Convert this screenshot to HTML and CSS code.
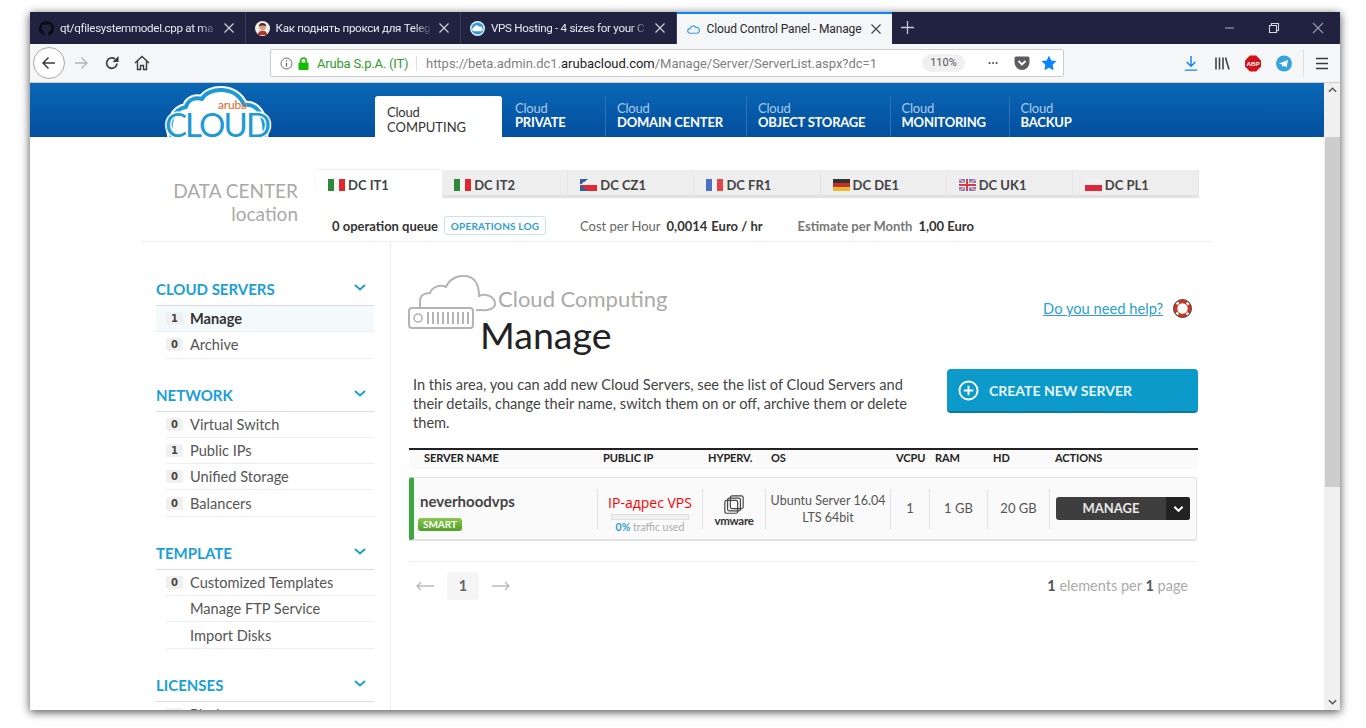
FILE: index.html
```html
<!DOCTYPE html>
<html lang="en">

<head>
    <meta charset="UTF-8">
    <meta name="viewport" content="width=device-width, initial-scale=1">
    <title>Cloud Control Panel - Manage</title>
    <link rel="stylesheet" href="styles.css">
</head>

<body>
    <div class="window">
        <div class="tabstrip">
            <div class="tab">
                <svg class="favicon" viewBox="0 0 16 16"><path fill="#0c0c14" d="M8 0a8 8 0 0 0-2.5 15.6c.4.1.5-.2.5-.4v-1.4c-2.2.5-2.7-1-2.7-1-.4-.9-.9-1.2-.9-1.2-.7-.5.1-.5.1-.5.8.1 1.2.8 1.2.8.7 1.2 1.9.9 2.3.7.1-.5.3-.9.5-1.1-1.8-.2-3.6-.9-3.6-4 0-.9.3-1.6.8-2.1-.1-.2-.4-1 .1-2.1 0 0 .7-.2 2.2.8a7.600 7.600 0 0 1 4 0c1.500-1 2.200-.8 2.200-.8.500 1.100.2 1.900.1 2.100.5.600.8 1.300.8 2.100 0 3.100-1.900 3.800-3.700 4 .3.300.6.800.6 1.500v2.200c0 .2.100.5.600.4A8 8 0 0 0 8 0z"/></svg>
                <span class="tab-title">qt/qfilesystemmodel.cpp at ma</span>
                <svg class="tab-close" viewBox="0 0 10 10"><path stroke="#d0d1dc" stroke-width="1.200" d="M.5.5l9 9M9.500.5l-9 9"/></svg>
            </div>
            <div class="tab">
                <svg class="favicon" viewBox="0 0 16 16"><circle cx="8" cy="8" r="8" fill="#f2efe9"/><circle cx="8" cy="6.500" r="3.500" fill="#d9a184"/><path fill="#4a2a20" d="M4 6c0-3 2-4 4-4s4 1 4 4c-2-1.500-6-1.500-8 0z"/><path fill="#b5352c" d="M3 15c0-3 2-4.500 5-4.500s5 1.500 5 4.500z"/></svg>
                <span class="tab-title">Как поднять прокси для Teleg</span>
                <svg class="tab-close" viewBox="0 0 10 10"><path stroke="#d0d1dc" stroke-width="1.200" d="M.5.5l9 9M9.500.5l-9 9"/></svg>
            </div>
            <div class="tab">
                <svg class="favicon" viewBox="0 0 16 16"><circle cx="8" cy="8" r="8" fill="#e4f2fa"/><circle cx="8" cy="8" r="6.500" fill="#2f9bd6"/><path fill="#fff" d="M4.500 11a2 2 0 0 1-.3-4 3 3 0 0 1 5.600-.8 2.400 2.400 0 0 1 2 4.800z"/></svg>
                <span class="tab-title">VPS Hosting - 4 sizes for your C</span>
                <svg class="tab-close" viewBox="0 0 10 10"><path stroke="#d0d1dc" stroke-width="1.200" d="M.5.5l9 9M9.500.5l-9 9"/></svg>
            </div>
            <div class="tab tab-active">
                <svg class="favicon" viewBox="0 0 16 16"><path fill="none" stroke="#3f9fd8" stroke-width="1.300" d="M4.500 12a2.500 2.500 0 0 1-.3-5 3.400 3.400 0 0 1 6.300-1 2.900 2.900 0 0 1 1.500 6z"/></svg>
                <span class="tab-title">Cloud Control Panel - Manage</span>
                <svg class="tab-close" viewBox="0 0 10 10"><path stroke="#444" stroke-width="1.200" d="M.5.5l9 9M9.500.5l-9 9"/></svg>
            </div>
            <svg class="newtab" viewBox="0 0 14 14"><path fill="none" stroke="#c4c6d4" stroke-width="1.400" d="M7 0v14M0 7h14"/></svg>
            <div class="winctl">
                <svg viewBox="0 0 12 12"><path stroke="#9a9cae" stroke-width="1.200" d="M1 6h9"/></svg>
                <svg viewBox="0 0 12 12"><path fill="none" stroke="#d5d6de" stroke-width="1.100" d="M1.500 3.500h7v7h-7zM3.500 3.500v-2h7v7h-2"/></svg>
                <svg viewBox="0 0 12 12"><path stroke="#9a9cae" stroke-width="1.100" d="M1 1l10 10M11 1L1 11"/></svg>
            </div>
        </div>

        <div class="toolbar">
            <div class="backbtn">
                <svg viewBox="0 0 16 16"><path fill="none" stroke="#3a3a3a" stroke-width="1.500" d="M14 8H2M7.500 2.500 2 8l5.500 5.500"/></svg>
            </div>
            <svg class="tool tool-fwd" viewBox="0 0 16 16"><path fill="none" stroke="#b4b4b4" stroke-width="1.400" d="M2 8h12M8.500 2.500 14 8l-5.500 5.500"/></svg>
            <svg class="tool tool-reload" viewBox="0 0 16 16"><path fill="none" stroke="#3a3a3a" stroke-width="1.700" d="M13 8.500A5.200 5.200 0 1 1 11 4"/><path fill="#3a3a3a" d="M14.500 1v6h-6z"/></svg>
            <svg class="tool tool-home" viewBox="0 0 16 16"><path fill="none" stroke="#3a3a3a" stroke-width="1.400" d="M1 8l7-6.500L15 8M3.500 6.500V14.500h3v-4h3v4h3V6.500"/></svg>
            <div class="urlbar">
                <svg class="url-info" viewBox="0 0 16 16"><circle cx="8" cy="8" r="6.700" fill="none" stroke="#666" stroke-width="1.200"/><path stroke="#666" stroke-width="1.500" d="M8 7v5M8 4v1.600"/></svg>
                <svg class="url-lock" viewBox="0 0 12 14"><path fill="none" stroke="#12bc00" stroke-width="1.800" d="M3 6.500V4a3 3 0 0 1 6 0v2.500"/><rect x="0.500" y="6" width="11" height="8" rx="1" fill="#12bc00"/></svg>
                <span class="url-org">Aruba S.p.A. (IT)</span>
                <span class="url-text">https://beta.admin.dc1.<b>arubacloud.com</b>/Manage/Server/ServerList.aspx?dc=1</span>
                <span class="url-zoom">110%</span>
                <span class="url-dots">•••</span>
                <svg class="url-pocket" viewBox="0 0 16 16"><path fill="#5c5c61" d="M2 1.500h12a1.500 1.500 0 0 1 1.500 1.500v4.500a7.500 7.500 0 0 1-15 0V3A1.500 1.500 0 0 1 2 1.500z"/><path fill="none" stroke="#fff" stroke-width="1.800" d="M4.500 6 8 9.500 11.500 6"/></svg>
                <svg class="url-star" viewBox="0 0 16 16"><path fill="#0a84ff" d="M8 .5l2.300 4.900 5.200.7-3.800 3.700.9 5.400L8 12.700l-4.600 2.500.9-5.400L.5 6.100l5.200-.7z"/></svg>
            </div>
            <div class="tool-right">
                <svg viewBox="0 0 16 18"><path fill="none" stroke="#0a84ff" stroke-width="1.500" d="M8 1v11M3.500 7.500 8 12l4.500-4.500M1.500 16h13"/></svg>
                <svg viewBox="0 0 16 16"><path fill="none" stroke="#3a3a3a" stroke-width="1.500" d="M2 2v12M5.500 2v12M9 2v12M11.500 2l3.500 12"/></svg>
                <svg viewBox="0 0 18 18"><path fill="#d0121b" d="M5.500 0h7L18 5.500v7L12.500 18h-7L0 12.500v-7z"/><text class="abp" x="9" y="11.500" text-anchor="middle">ABP</text></svg>
                <svg viewBox="0 0 16 16"><circle cx="8" cy="8" r="8" fill="#35a5dc"/><path fill="#fff" d="M3 8l9-3.500-1.500 7.500-3-2-1.500 1.500v-2.500z"/></svg>
                <span class="tool-sep"></span>
                <svg viewBox="0 0 16 14"><path stroke="#3a3a3a" stroke-width="1.600" d="M2 2h12M2 7h12M2 12h12"/></svg>
            </div>
        </div>

        <div class="viewport">
            <div class="page">
                <header class="site-head">
                    <svg class="logo" viewBox="0 0 109 52">
                        <path fill="#fff" stroke="#fff" stroke-width="8" stroke-linejoin="round" d="M8 54C3 38 10 24 22 22 24 14 32 12 38 14 44 2 72 0 80 20 92 18 103 30 100 54z"/>
                        <path fill="#fff" stroke="#1e9ad6" stroke-width="4" stroke-linejoin="round" d="M8 54C3 38 10 24 22 22 24 14 32 12 38 14 44 2 72 0 80 20 92 18 103 30 100 54z"/>
                        <text class="logo-aruba" x="54" y="24" textLength="29">aruba</text>
                        <text class="logo-cloud" x="1" y="52" textLength="106">CLOUD</text>
                    </svg>
                    <nav class="mainnav">
                        <a class="nav-item nav-active">Cloud<b>COMPUTING</b></a>
                        <a class="nav-item">Cloud<b>PRIVATE</b></a>
                        <a class="nav-item">Cloud<b>DOMAIN CENTER</b></a>
                        <a class="nav-item">Cloud<b>OBJECT STORAGE</b></a>
                        <a class="nav-item">Cloud<b>MONITORING</b></a>
                        <a class="nav-item">Cloud<b>BACKUP</b></a>
                    </nav>
                </header>

                <section class="dc-bar">
                    <div class="dc-label">DATA CENTER<span>location</span></div>
                    <div class="dc-right">
                        <div class="dc-tabs">
                            <div class="dc-tab dc-tab-active"><i class="flag flag-it"></i>DC IT1</div>
                            <div class="dc-tab"><i class="flag flag-it"></i>DC IT2</div>
                            <div class="dc-tab"><i class="flag flag-cz"></i>DC CZ1</div>
                            <div class="dc-tab"><i class="flag flag-fr"></i>DC FR1</div>
                            <div class="dc-tab"><i class="flag flag-de"></i>DC DE1</div>
                            <div class="dc-tab"><i class="flag flag-uk"></i>DC UK1</div>
                            <div class="dc-tab"><i class="flag flag-pl"></i>DC PL1</div>
                        </div>
                        <div class="dc-info">
                            <b>0 operation queue</b>
                            <a class="ops-log">OPERATIONS LOG</a>
                            <span class="cost">Cost per Hour</span>
                            <b class="cost-val">0,0014</b>
                            <b class="cost-unit">Euro / hr</b>
                            <span class="estimate">Estimate per Month</span>
                            <b class="cost-val">1,00 Euro</b>
                        </div>
                    </div>
                </section>

                <div class="content">
                    <aside class="sidebar">
                        <div class="side-group">
                            <h3>CLOUD SERVERS<svg viewBox="0 0 12 7"><path fill="none" stroke="#1a9fd8" stroke-width="2" d="M1 1l5 4.500L11 1"/></svg></h3>
                            <a class="side-item side-active"><em>1</em>Manage</a>
                            <a class="side-item"><em>0</em>Archive</a>
                        </div>
                        <div class="side-group">
                            <h3>NETWORK<svg viewBox="0 0 12 7"><path fill="none" stroke="#1a9fd8" stroke-width="2" d="M1 1l5 4.500L11 1"/></svg></h3>
                            <a class="side-item"><em>0</em>Virtual Switch</a>
                            <a class="side-item"><em>1</em>Public IPs</a>
                            <a class="side-item"><em>0</em>Unified Storage</a>
                            <a class="side-item"><em>0</em>Balancers</a>
                        </div>
                        <div class="side-group">
                            <h3>TEMPLATE<svg viewBox="0 0 12 7"><path fill="none" stroke="#1a9fd8" stroke-width="2" d="M1 1l5 4.500L11 1"/></svg></h3>
                            <a class="side-item"><em>0</em>Customized Templates</a>
                            <a class="side-item side-plain">Manage FTP Service</a>
                            <a class="side-item side-plain">Import Disks</a>
                        </div>
                        <div class="side-group">
                            <h3>LICENSES<svg viewBox="0 0 12 7"><path fill="none" stroke="#1a9fd8" stroke-width="2" d="M1 1l5 4.500L11 1"/></svg></h3>
                            <a class="side-item"><em>0</em>Plesk</a>
                        </div>
                    </aside>

                    <main class="main">
                        <div class="title-row">
                            <svg class="title-icon" viewBox="0 0 88 56">
                                <path fill="none" stroke="#b4b4b4" stroke-width="2" d="M12 33v-7c0-5 4-8 10-8 2-6 10-9 16-6 4-9 13-12 20-11 8 1 13 8 13 20 6-3 16 0 16 8 0 5-8 7-14 6h-5"/>
                                <rect x="1" y="33" width="64" height="20" rx="3" fill="#fff" stroke="#b4b4b4" stroke-width="2"/>
                                <circle cx="10" cy="43" r="4" fill="none" stroke="#b4b4b4" stroke-width="1.600"/>
                                <path stroke="#b4b4b4" stroke-width="2" d="M20 37v12M25 37v12M30 37v12M35 37v12M40 37v12M45 37v12M50 37v12M55 37v12M60 37v12"/>
                            </svg>
                            <div class="title-text">
                                <div class="title-sub">Cloud Computing</div>
                                <h1>Manage</h1>
                            </div>
                            <a class="help">Do you need help?</a>
                            <svg class="help-icon" viewBox="0 0 20 20"><circle cx="10" cy="10" r="7.500" fill="none" stroke="#c9371f" stroke-width="4"/><circle cx="10" cy="10" r="7.500" fill="none" stroke="#fff" stroke-width="2.500" stroke-dasharray="3 8.800" stroke-dashoffset="1.500" transform="rotate(45 10 10)"/><circle cx="10" cy="10" r="9.500" fill="none" stroke="#444" stroke-width="1"/></svg>
                        </div>

                        <div class="intro-row">
                            <p>In this area, you can add new Cloud Servers, see the list of Cloud Servers and their details, change their name, switch them on or off, archive them or delete them.</p>
                            <a class="create-btn">
                                <svg viewBox="0 0 22 22"><circle cx="11" cy="11" r="9.500" fill="none" stroke="#fff" stroke-width="2"/><path stroke="#fff" stroke-width="2" d="M11 6v10M6 11h10"/></svg>
                                CREATE NEW SERVER
                            </a>
                        </div>

                        <div class="table-head">
                            <span class="first">SERVER NAME</span>
                            <span>PUBLIC IP</span>
                            <span>HYPERV.</span>
                            <span>OS</span>
                            <span>VCPU</span>
                            <span>RAM</span>
                            <span>HD</span>
                            <span>ACTIONS</span>
                        </div>

                        <div class="server-row">
                            <div class="cell-name">
                                <b>neverhoodvps</b>
                                <span class="badge-smart">SMART</span>
                            </div>
                            <div class="cell cell-ip">
                                <span class="ip">IP-адрес VPS</span>
                                <span class="traffic-bar"></span>
                                <span class="traffic"><b>0%</b> traffic used</span>
                            </div>
                            <div class="cell cell-hyper">
                                <svg viewBox="0 0 24 24"><g fill="none" stroke="#444" stroke-width="1.300"><rect x="2" y="7" width="14" height="14" rx="2"/><rect x="5" y="4.500" width="14" height="14" rx="2"/><rect x="8" y="2" width="14" height="14" rx="2"/></g></svg>
                                <span class="vmware">vmware</span>
                            </div>
                            <div class="cell cell-os">Ubuntu Server 16.04<br>LTS 64bit</div>
                            <div class="cell">1</div>
                            <div class="cell">1 GB</div>
                            <div class="cell">20 GB</div>
                            <div class="cell cell-actions">
                                <a class="manage-btn">
                                    <span>MANAGE</span>
                                    <i><svg viewBox="0 0 12 8"><path fill="none" stroke="#fff" stroke-width="2.200" d="M1.500 1.500 6 6l4.500-4.500"/></svg></i>
                                </a>
                            </div>
                        </div>

                        <div class="pager">
                            <svg viewBox="0 0 18 10"><path fill="none" stroke="#bbb" stroke-width="1.400" d="M18 5H1M5 1 1 5l4 4"/></svg>
                            <span class="page-num">1</span>
                            <svg viewBox="0 0 18 10"><path fill="none" stroke="#bbb" stroke-width="1.400" d="M0 5h17M13 1l4 4-4 4"/></svg>
                            <span class="page-count"><b>1</b> elements per <b>1</b> page</span>
                        </div>
                    </main>
                </div>
            </div>
            <div class="scrollbar">
                <svg class="sb-up" viewBox="0 0 10 6"><path fill="none" stroke="#555" stroke-width="1.600" d="M1 5l4-4 4 4"/></svg>
                <div class="sb-thumb"></div>
                <svg class="sb-down" viewBox="0 0 10 6"><path fill="none" stroke="#555" stroke-width="1.600" d="M1 1l4 4 4-4"/></svg>
            </div>
        </div>
    </div>
</body>

</html>
```

FILE: styles.css
```css
html,
body {
    margin: 0;
    height: 728px;
    overflow: hidden;
    background: #fff;
}

body {
    font-family: 'Lato', sans-serif;
    color: #444;
}

a {
    cursor: pointer;
}

.window {
    margin: 12px 0 0 30px;
    width: 1310px;
    height: 698px;
    display: flex;
    flex-direction: column;
    background: #fff;
    box-shadow: 0 2px 9px rgba(0, 0, 0, .7);
}

/* browser chrome */
.tabstrip {
    height: 32px;
    flex: none;
    display: flex;
    align-items: stretch;
    background: #20223f;
    font-family: 'Roboto', sans-serif;
    font-size: 11.6px;
}

.tab {
    width: 215.5px;
    box-sizing: border-box;
    padding: 0 11px 0 9px;
    display: flex;
    align-items: center;
    gap: 6px;
    color: #e8e9f0;
    border-right: 1px solid #3b3d58;
}

.tab-active {
    background: #f5f6f7;
    color: #2a2a2e;
    font-size: 12px;
    border-top: 2px solid #0a84ff;
    border-right: none;
}

.favicon {
    width: 15px;
    height: 15px;
    flex: none;
}

.tab-title {
    flex: 1;
    min-width: 0;
    white-space: nowrap;
    overflow: hidden;
    letter-spacing: -.3px;
    -webkit-mask-image: linear-gradient(to right, #000 88%, transparent);
    mask-image: linear-gradient(to right, #000 88%, transparent);
}

.tab-active .tab-title {
    letter-spacing: -.12px;
    -webkit-mask-image: none;
    mask-image: none;
}

.tab-close {
    width: 10px;
    height: 10px;
    flex: none;
}

.newtab {
    width: 13px;
    height: 13px;
    margin: 9px 0 0 9px;
}

.winctl {
    margin-left: auto;
    display: flex;
    align-items: center;
    gap: 32px;
    padding-right: 16px;
}

.winctl svg {
    width: 12px;
    height: 12px;
}

.toolbar {
    height: 39px;
    flex: none;
    box-sizing: border-box;
    display: flex;
    align-items: center;
    position: relative;
    background: #f5f6f7;
    border-bottom: 1px solid #ccc;
}

.backbtn {
    width: 32px;
    height: 32px;
    margin-left: 3px;
    flex: none;
    box-sizing: border-box;
    display: flex;
    justify-content: center;
    align-items: center;
    background: #fff;
    border: 1px solid #a8a8a8;
    border-radius: 50%;
}

.backbtn svg {
    width: 16px;
    height: 16px;
}

.tool {
    width: 16px;
    height: 16px;
    flex: none;
}

.tool-fwd {
    margin-left: 8px;
}

.tool-reload {
    margin-left: 15px;
}

.tool-home {
    margin-left: 14px;
}

.urlbar {
    width: 794px;
    height: 28px;
    margin-left: 120px;
    box-sizing: border-box;
    flex: none;
    display: flex;
    align-items: center;
    background: #fff;
    border: 1px solid #ccc;
    border-radius: 2px;
    font-family: 'Roboto', sans-serif;
    font-size: 13px;
    white-space: nowrap;
}

.url-info {
    width: 13px;
    height: 13px;
    margin-left: 9px;
}

.url-lock {
    width: 11px;
    height: 13px;
    margin-left: 5px;
}

.url-org {
    width: 100px;
    box-sizing: border-box;
    margin-left: 8px;
    color: #2f9a2f;
    letter-spacing: -.2px;
    border-right: 1px solid #cfe8cf;
}

.url-text {
    width: 496px;
    margin-left: 9px;
    color: #808080;
    letter-spacing: -.02px;
}

.url-text b {
    font-weight: 400;
    color: #222;
}

.url-zoom {
    width: 43px;
    height: 18px;
    line-height: 18px;
    text-align: center;
    font-size: 11px;
    color: #555;
    background: #f0f0f0;
    border-radius: 9px;
}

.url-dots {
    width: 18px;
    margin-left: 23px;
    font-size: 9px;
    letter-spacing: .5px;
    color: #444;
}

.url-pocket {
    width: 16px;
    height: 16px;
    margin-left: 8px;
}

.url-star {
    width: 16px;
    height: 16px;
    margin-left: 11px;
}

.tool-right {
    margin-left: auto;
    display: flex;
    align-items: center;
    gap: 15px;
    padding-right: 10px;
}

.tool-right svg {
    width: 16px;
    height: 17px;
}

.tool-sep {
    width: 1px;
    height: 28px;
    margin: 0 -4.5px;
    background: #e0e0e0;
}

.abp {
    font: bold 7px 'Liberation Sans', sans-serif;
    fill: #fff;
}

.viewport {
    flex: 1;
    min-height: 0;
    display: flex;
}

.page {
    flex: 1;
    min-width: 0;
    overflow: hidden;
}

.scrollbar {
    width: 16px;
    flex: none;
    display: flex;
    flex-direction: column;
    align-items: center;
    background: #f0f0f0;
}

.sb-up,
.sb-down {
    width: 9px;
    height: 6px;
    flex: none;
}

.sb-up {
    margin: 4px 0 0;
}

.sb-thumb {
    width: 15px;
    height: 350px;
    margin: 44px 0 0 1px;
    background: #cdcdcd;
}

.sb-down {
    margin-top: auto;
    margin-bottom: 5px;
}

/* site header */
.site-head {
    height: 54px;
    box-sizing: border-box;
    padding-left: 134px;
    display: flex;
    align-items: flex-end;
    overflow: hidden;
    background: linear-gradient(#0a67b4, #034f9f);
}

.logo {
    width: 109px;
    height: 52px;
    flex: none;
    margin-right: 102px;
}

.logo-aruba {
    font: 12px 'Lato', sans-serif;
    fill: #e8632a;
}

.logo-cloud {
    font: 33px 'Lato', sans-serif;
    fill: #1e9ad6;
    stroke: #fff;
    stroke-width: 3px;
    paint-order: stroke;
}

.mainnav {
    display: grid;
    grid-template-columns: 127px 103px 141px 143.5px 119px auto;
    height: 41px;
    font-size: 13px;
    letter-spacing: -.2px;
}

.nav-item {
    box-sizing: border-box;
    padding: 5px 0 0 11px;
    line-height: 14px;
    color: #a9cbe8;
    border-left: 1px solid #2a73b8;
}

.nav-item b {
    display: block;
    color: #fff;
}

.nav-item:nth-child(2) {
    padding-left: 13px;
    border-left: none;
}

.nav-active {
    padding: 9px 0 0 12px;
    line-height: 15px;
    color: #333;
    background: #fff;
    border: none;
    border-radius: 3px 3px 0 0;
}

.nav-active b {
    color: #333;
    font-weight: 400;
    letter-spacing: 0;
}

/* data center strip */
.dc-bar {
    width: 1071px;
    height: 105px;
    margin-left: 111px;
    box-sizing: border-box;
    padding-top: 33px;
    display: flex;
    border-bottom: 1px solid #eee;
}

.dc-label {
    width: 157px;
    margin-right: 18px;
    flex: none;
    padding-top: 9px;
    text-align: right;
    font-size: 19px;
    line-height: 23px;
    color: #a9a9a9;
}

.dc-label span {
    display: block;
}

.dc-tabs {
    width: 883px;
    height: 28px;
    display: grid;
    grid-template-columns: repeat(7, 1fr);
    background: #eee;
    box-shadow: inset 0 -3px 0 #e2e2e2;
}

.dc-tab {
    display: flex;
    align-items: center;
    gap: 3px;
    padding: 1px 0 0 12px;
    font-size: 13px;
    font-weight: 700;
    color: #444;
    border-right: 1px solid #e6e6e6;
}

.dc-tab-active {
    background: #fff;
    border-right: none;
    box-shadow: 0 -1px 2px #eee;
}

.flag {
    width: 17px;
    height: 12px;
    flex: none;
}

.flag-it {
    background: linear-gradient(to right, #2d8a3a 33%, #f4f4f4 33% 66%, #e0262e 66%);
}

.flag-cz {
    background: linear-gradient(to bottom right, #2f5fa8 48%, transparent 49%) 0 0 / 50% 50% no-repeat, linear-gradient(to top right, #2f5fa8 48%, transparent 49%) 0 100% / 50% 50% no-repeat, linear-gradient(#f0f0f0 50%, #dd2a35 50%);
}

.flag-fr {
    background: linear-gradient(to right, #4c72c4 33%, #f2f2f2 33% 66%, #e2444a 66%);
}

.flag-de {
    background: linear-gradient(#333 33%, #c9302c 33% 66%, #e8b830 66%);
}

.flag-uk {
    background: linear-gradient(#d8384a, #d8384a) center / 100% 2px no-repeat, linear-gradient(#d8384a, #d8384a) center / 2px 100% no-repeat, linear-gradient(#f2f2f2, #f2f2f2) center / 100% 4px no-repeat, linear-gradient(#f2f2f2, #f2f2f2) center / 4px 100% no-repeat, linear-gradient(35deg, transparent 45%, #e89aa5 45% 55%, transparent 55%), linear-gradient(-35deg, #6f86c4 45%, #e89aa5 45% 55%, #6f86c4 55%);
}

.flag-pl {
    background: linear-gradient(#f2f2f2 50%, #e0263a 50%);
}

.dc-info {
    height: 19px;
    margin: 18px 0 0 16px;
    display: flex;
    align-items: center;
    font-size: 13px;
    color: #333;
    white-space: nowrap;
}

.ops-log {
    width: 102px;
    height: 19px;
    margin-left: 6px;
    box-sizing: border-box;
    text-align: center;
    font-size: 10px;
    font-weight: 700;
    line-height: 18px;
    letter-spacing: .2px;
    color: #2f9fd0;
    border: 1px solid #c6e3f1;
    border-radius: 3px;
}

.cost {
    margin-left: 34px;
    color: #666;
}

.cost-val {
    margin-left: 6px;
}

.cost-unit {
    margin-left: 4px;
}

.estimate {
    margin-left: 35px;
    color: #777;
    font-weight: 700;
}

/* two columns below the strip */
.content {
    margin-left: 126px;
    display: flex;
    height: 480px;
}

.sidebar {
    width: 218px;
    flex: none;
    margin-right: 16px;
    padding-top: 37px;
}

.side-group {
    margin-bottom: 26px;
}

.side-group h3 {
    height: 27px;
    margin: 0;
    box-sizing: border-box;
    display: flex;
    justify-content: space-between;
    padding: 1px 8px 0 0;
    font-size: 15px;
    font-weight: 700;
    line-height: 18px;
    color: #1a9fd8;
    border-bottom: 1px solid #ddd;
}

.side-group h3 svg {
    width: 12px;
    height: 7px;
    margin-top: 4px;
}

.side-item {
    height: 26.3px;
    margin-left: 10px;
    box-sizing: border-box;
    display: flex;
    align-items: center;
    font-size: 14.6px;
    color: #555;
    border-bottom: 1px solid #eee;
}

.side-item em {
    width: 17px;
    height: 13px;
    margin-right: 7px;
    flex: none;
    text-align: center;
    font: bold 10px/13px 'DejaVu Sans', sans-serif;
    color: #444;
    background: #f0f0f0;
    border-radius: 2px;
}

.side-plain {
    padding-left: 24px;
}

.side-active {
    margin-left: 0;
    padding-left: 10px;
    font-weight: 700;
    color: #333;
    background: #f2fafc;
}

.main {
    width: 789px;
    padding: 33px 0 0 18px;
    border-left: 1px solid #eee;
}

.title-row {
    display: flex;
    height: 60px;
    margin-left: -1px;
}

.title-icon {
    width: 88px;
    height: 56px;
    flex: none;
}

.title-text {
    margin-left: -16px;
}

.title-sub {
    margin-left: 18px;
    font-size: 22px;
    line-height: 26px;
    padding-top: 11px;
    color: #aaa;
}

.title-text h1 {
    margin: 4px 0 0;
    font-size: 37.5px;
    font-weight: 400;
    line-height: 38px;
    color: #222;
}

.help {
    margin: 24px 0 0 auto;
    font-size: 14.7px;
    line-height: 18px;
    height: 18px;
    color: #2a9fd0;
    text-decoration: underline;
}

.help-icon {
    width: 19px;
    height: 19px;
    margin: 24px 6px 0 10px;
    flex: none;
}

.intro-row {
    display: flex;
    justify-content: space-between;
    margin-top: 34px;
    height: 79px;
}

.intro-row p {
    width: 500px;
    margin: 6px 0 0 4px;
    font-size: 14.6px;
    line-height: 19px;
    color: #444;
}

.create-btn {
    width: 251px;
    height: 44px;
    box-sizing: border-box;
    display: flex;
    align-items: center;
    gap: 10px;
    padding-left: 11px;
    font-size: 14px;
    font-weight: 700;
    color: #e8f6fb;
    background: #0b9ac9;
    border-bottom: 2px solid #087aa0;
    border-radius: 4px;
}

.create-btn svg {
    width: 21px;
    height: 21px;
}

.table-head {
    height: 19px;
    display: grid;
    grid-template-columns: 188px 105px 63px 125px 39px 58px 62px 1fr;
    background: #fafafa;
    border-top: 2px solid #222;
    font-size: 11px;
    font-weight: 700;
    line-height: 16px;
    color: #222;
    white-space: nowrap;
    letter-spacing: -.1px;
}

.table-head span {
    padding-left: 6px;
}

.table-head .first {
    padding-left: 15px;
}

.server-row {
    height: 64px;
    width: 788px;
    margin-top: 8px;
    box-sizing: border-box;
    display: grid;
    grid-template-columns: 183px 105px 63px 125px 39px 58px 62px 1fr;
    align-items: center;
    background: #fafafa;
    border: 1px solid #e2e2e2;
    border-bottom-width: 2px;
    border-left: 5px solid #3aa83a;
    border-radius: 3px;
    font-size: 13px;
    color: #555;
}

.cell-name {
    padding: 6px 0 0 6px;
}

.cell-name b {
    display: block;
    font-size: 15px;
    color: #444;
}

.badge-smart {
    display: block;
    width: 44px;
    height: 13px;
    margin: 8px 0 0 -2px;
    text-align: center;
    font-size: 10px;
    font-weight: 700;
    line-height: 13px;
    color: #fff;
    background: linear-gradient(#8ac84a, #4f9e2a);
    border-radius: 3px;
}

.cell {
    height: 40px;
    box-sizing: border-box;
    display: flex;
    align-items: center;
    justify-content: center;
    text-align: center;
    line-height: 17px;
    border-left: 1px solid #e2e2e2;
}

.cell-os {
    font-size: 12.5px;
}

.cell-ip {
    flex-direction: column;
    justify-content: flex-start;
}

.ip {
    margin-top: 5px;
    font-family: 'Open Sans', sans-serif;
    font-size: 14px;
    color: #f00;
    line-height: 17px;
    white-space: nowrap;
}

.traffic-bar {
    width: 78px;
    height: 6px;
    margin-top: 3px;
    flex: none;
    box-sizing: border-box;
    background: #f0f0f0;
    border: 1px solid #e0e0e0;
}

.traffic {
    margin-top: 1px;
    font-size: 10.5px;
    line-height: 13px;
    color: #aaa;
    white-space: nowrap;
}

.traffic b {
    color: #2f9fd0;
}

.cell-hyper {
    flex-direction: column;
    line-height: 10px;
}

.cell-hyper svg {
    width: 22px;
    height: 22px;
    margin-top: 2px;
}

.vmware {
    font-size: 11.5px;
    font-weight: 700;
    letter-spacing: -.3px;
    color: #333;
}

.cell-actions {
    padding: 0 0 0 6px;
    justify-content: flex-start;
}

.manage-btn {
    width: 134px;
    height: 23px;
    display: flex;
    overflow: hidden;
    font-weight: 700;
    line-height: 23px;
    color: #e8e8e8;
    background: #3e3e3e;
    border-radius: 3px;
}

.manage-btn span {
    flex: 1;
}

.manage-btn i {
    width: 24px;
    display: flex;
    justify-content: center;
    align-items: center;
    background: #222;
}

.manage-btn svg {
    width: 11px;
    height: 8px;
}

.pager {
    height: 28px;
    margin-top: 20px;
    padding-top: 10px;
    display: flex;
    align-items: center;
    gap: 13px;
    border-top: 1px solid #eee;
    font-size: 14.5px;
    color: #aaa;
}

.pager svg {
    width: 18px;
    height: 10px;
}

.pager svg:first-child {
    margin-left: 7px;
}

.page-num {
    width: 32px;
    height: 28px;
    text-align: center;
    font-weight: 700;
    line-height: 28px;
    color: #666;
    background: #f5f5f5;
    border-radius: 4px;
}

.page-count {
    margin-left: auto;
    padding-right: 10px;
    margin-top: -2px;
}

.page-count b {
    color: #555;
}
```
